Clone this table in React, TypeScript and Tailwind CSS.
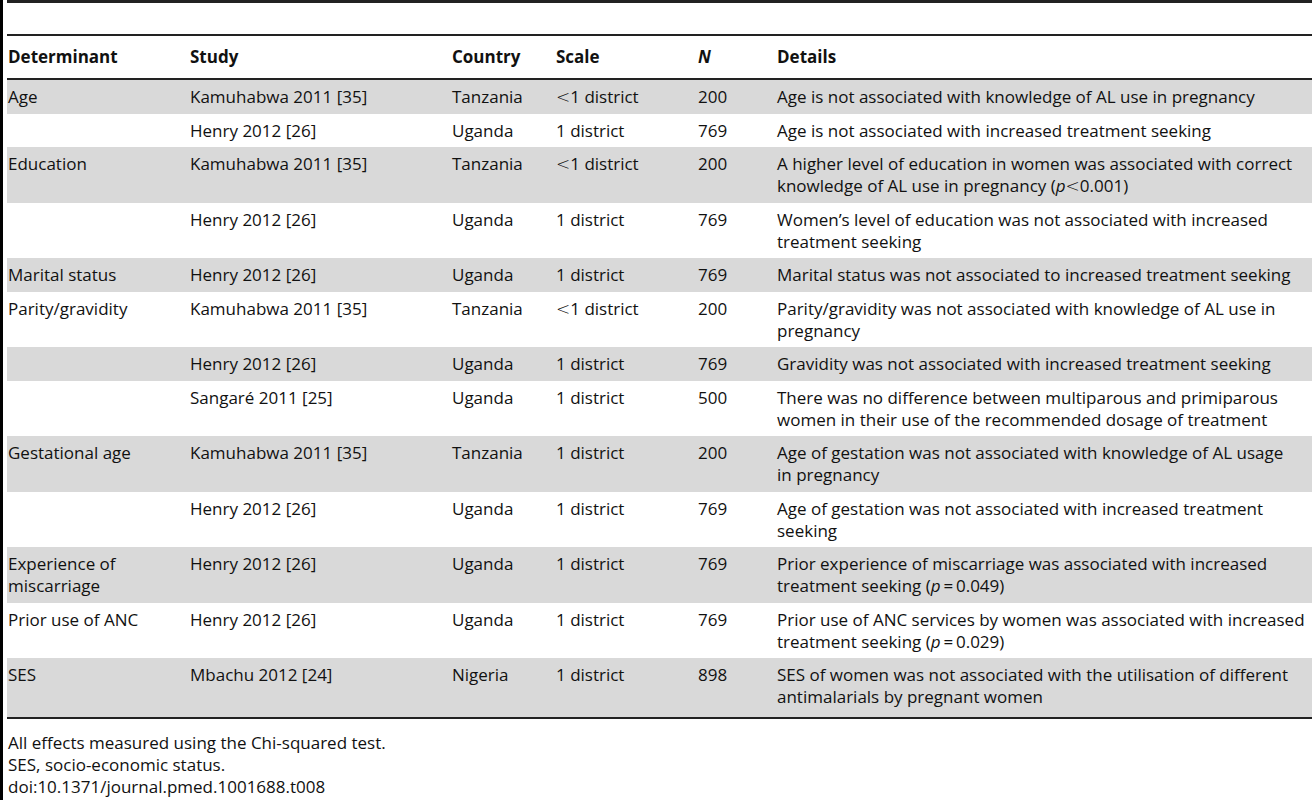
const rows: {
  det?: string[];
  study: string;
  country: string;
  scale: string;
  n: string;
  details: React.ReactNode[];
}[] = [
  { det: ["Age"], study: "Kamuhabwa 2011 [35]", country: "Tanzania", scale: "lt", n: "200", details: ["Age is not associated with knowledge of AL use in pregnancy"] },
  { study: "Henry 2012 [26]", country: "Uganda", scale: "1 district", n: "769", details: ["Age is not associated with increased treatment seeking"] },
  {
    det: ["Education"], study: "Kamuhabwa 2011 [35]", country: "Tanzania", scale: "lt", n: "200",
    details: [
      "A higher level of education in women was associated with correct",
      <>knowledge of AL use in pregnancy (<i>p</i><Lt />0.001)</>,
    ],
  },
  { study: "Henry 2012 [26]", country: "Uganda", scale: "1 district", n: "769", details: ["Women\u2019s level of education was not associated with increased", "treatment seeking"] },
  { det: ["Marital status"], study: "Henry 2012 [26]", country: "Uganda", scale: "1 district", n: "769", details: ["Marital status was not associated to increased treatment seeking"] },
  { det: ["Parity/gravidity"], study: "Kamuhabwa 2011 [35]", country: "Tanzania", scale: "lt", n: "200", details: ["Parity/gravidity was not associated with knowledge of AL use in", "pregnancy"] },
  { study: "Henry 2012 [26]", country: "Uganda", scale: "1 district", n: "769", details: ["Gravidity was not associated with increased treatment seeking"] },
  { study: "Sangar\u00e9 2011 [25]", country: "Uganda", scale: "1 district", n: "500", details: ["There was no difference between multiparous and primiparous", "women in their use of the recommended dosage of treatment"] },
  { det: ["Gestational age"], study: "Kamuhabwa 2011 [35]", country: "Tanzania", scale: "1 district", n: "200", details: ["Age of gestation was not associated with knowledge of AL usage", "in pregnancy"] },
  { study: "Henry 2012 [26]", country: "Uganda", scale: "1 district", n: "769", details: ["Age of gestation was not associated with increased treatment", "seeking"] },
  {
    det: ["Experience of", "miscarriage"], study: "Henry 2012 [26]", country: "Uganda", scale: "1 district", n: "769",
    details: ["Prior experience of miscarriage was associated with increased", <>treatment seeking (<i>p</i>{"\u2009=\u2009"}0.049)</>],
  },
  {
    det: ["Prior use of ANC"], study: "Henry 2012 [26]", country: "Uganda", scale: "1 district", n: "769",
    details: ["Prior use of ANC services by women was associated with increased", <>treatment seeking (<i>p</i>{"\u2009=\u2009"}0.029)</>],
  },
  { det: ["SES"], study: "Mbachu 2012 [24]", country: "Nigeria", scale: "1 district", n: "898", details: ["SES of women was not associated with the utilisation of different", "antimalarials by pregnant women"] },
];

const cols = "grid grid-cols-[182px_262px_104px_142px_79px_1fr]";

// thin, wide math "less than" like the typeset table
function Lt() {
  return <span className="font-light" style={{ fontFamily: '"DejaVu Sans", sans-serif' }}>&lt;</span>;
}

function Lines({ items }: { items: React.ReactNode[] }) {
  return (
    <>
      {items.map((l, i) => (
        <div key={i} className="whitespace-nowrap">{l}</div>
      ))}
    </>
  );
}

export default function App() {
  return (
    <div
      className="flex h-[800px] w-[1312px] overflow-hidden bg-white text-[17px] leading-[22px] text-[#111]"
      style={{ fontFamily: '"Open Sans", "Noto Sans", sans-serif' }}
    >
      <div className="w-[3px] shrink-0 bg-black" />
      <div className="ml-[4px] flex-1">
        <div className="h-[3px] bg-[#222]" />
        <div className="h-[31px]" />
        <div className="h-[2px] bg-[#222]" />
        <div className={`${cols} h-[44px] items-center border-b-2 border-[#222] font-bold`}>
          <div className="pl-[1px]">Determinant</div>
          <div className="pl-[1px]">Study</div>
          <div className="pl-[1px]">Country</div>
          <div className="pl-[1px]">Scale</div>
          <div className="pl-[1px] italic">N</div>
          <div className="pl-[1px]">Details</div>
        </div>
        {rows.map((r, i) => (
          <div
            key={i}
            className={`${cols} pt-[6px] ${i === rows.length - 1 ? "pb-[9px]" : "pb-[5.5px]"} ${i % 2 === 0 ? "bg-[#d9d9d9]" : "bg-white"}`}
          >
            <div className="pl-[1px]">{r.det && <Lines items={r.det} />}</div>
            <div className="pl-[1px]">{r.study}</div>
            <div className="pl-[1px]">{r.country}</div>
            <div className="pl-[1px]">
              {r.scale === "lt" ? (
                <>
                  <Lt />1 district
                </>
              ) : (
                r.scale
              )}
            </div>
            <div className="pl-[1px]">{r.n}</div>
            <div className="pl-[1px]">
              <Lines items={r.details} />
            </div>
          </div>
        ))}
        <div className="h-[2px] bg-[#222]" />
        <div className="mt-[13px] pl-[1px]">
          <div>All effects measured using the Chi-squared test.</div>
          <div>SES, socio-economic status.</div>
          <div>doi:10.1371/journal.pmed.1001688.t008</div>
        </div>
      </div>
    </div>
  );
}
